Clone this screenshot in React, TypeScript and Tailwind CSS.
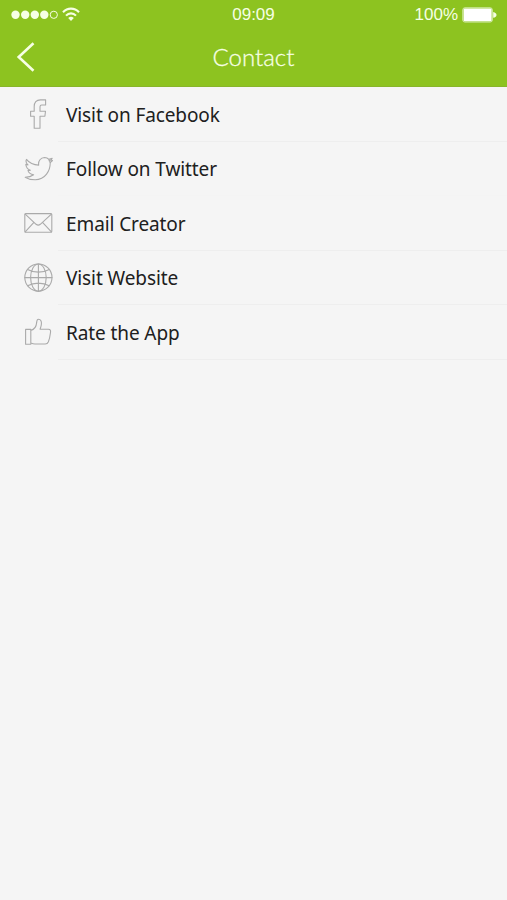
import type { ReactNode } from 'react';

const iconProps = {
  width: 30,
  height: 30,
  viewBox: '0 0 30 30',
  fill: 'none',
  stroke: '#aaaaaa',
  strokeWidth: 1.1,
  strokeLinejoin: 'round' as const,
  strokeLinecap: 'round' as const,
};

const FacebookIcon = () => (
  <svg {...iconProps}>
    <path d="M11.2 29.2V17.3H7.6V12.2H11.2V7.6C11.2 3.2 13.3 .9 17.4 .9H22.6V6H18.8C17.5 6 17 6.6 17 7.8V12.2H22.5L21.9 17.3H17V29.2Z" />
  </svg>
);

const TwitterIcon = () => (
  <svg {...iconProps}>
    <path d="M3.5 5.4C6.3 9 10.5 11 15.7 11.1C15 6.8 17.8 3.6 21.5 3.5C23.5 3.5 25 4.3 25.9 5.3L29.2 4.3L28 6.3L29.5 6.5L27.2 8.7C27.4 16.5 22.3 25.6 12.2 25.8C8.1 25.8 4.8 24.9 2.2 23.2C5.5 23.2 8.3 22.5 10.6 20.8C7.7 20.3 5.8 18.9 5 16.6L7.4 16.3C4.7 15.3 3 13.2 2.8 10.3L5 10.9C3 9.2 2.5 7.4 3.5 5.4Z" />
    <path d="M25.9 5.4L27.2 8.5M26 6.8L28.5 5.6" />
  </svg>
);

const MailIcon = () => (
  <svg {...iconProps}>
    <rect x="1.8" y="5.6" width="27" height="18.7" rx="1" />
    <path d="M2.2 6.1L13.1 16.3Q15.2 18 17.3 16.3L28.4 6.1M2.2 23.8L10.9 14.3M28.4 23.8L19.5 14.3" />
  </svg>
);

const GlobeIcon = () => (
  <svg {...iconProps}>
    <circle cx="15.4" cy="14.6" r="13.6" />
    <ellipse cx="15.4" cy="14.6" rx="7.8" ry="13.6" />
    <path d="M15.4 1V28.2M1.8 14.6H29M4.6 6.4C10.9 10 19.9 10 26.2 6.4M4.6 22.8C10.9 19.2 19.9 19.2 26.2 22.8" />
  </svg>
);

const ThumbIcon = () => (
  <svg {...iconProps}>
    <path d="M2.6 12.4H7.8V27.3H2.6ZM7.8 13.4C11.2 12.5 13.3 9.7 13.6 5.9C13.7 3.7 14.1 2.2 15.5 2.2C17.9 2.2 18.6 4.6 18.4 7C18.3 8.9 17.7 10.7 17.1 12.3H25.4C27.5 12.3 27.8 13.6 27.5 15.5C27.1 18.8 26.4 22.2 25.4 24.8C24.7 26.5 23.9 27 22.2 27H12C10.2 27 9.2 26.6 7.8 26" />
  </svg>
);

function Row({ icon, label, faint = false }: { icon: ReactNode; label: string; faint?: boolean }) {
  return (
    <li className="flex h-[54.5px] items-center pl-[23px]">
      <span className="w-[30px] shrink-0">{icon}</span>
      <span
        className={`ml-[5px] flex h-full flex-1 items-center border-b pl-2 pt-[2px] text-[19px] leading-6 tracking-[-0.1px] text-[#202020] ${
          faint ? 'border-[#f4f4f4]' : 'border-[#eeeeee]'
        }`}
      >
        {label}
      </span>
    </li>
  );
}

export default function App() {
  return (
    <div className="flex h-[900px] w-full flex-col overflow-hidden bg-[#f5f5f5] font-['Noto_Sans',sans-serif]">
      <header className="h-[87px] shrink-0 border-b border-[#88b52b] bg-[#8dc320] text-[#f6ffe4]">
        <div className="grid h-[29px] grid-cols-3 items-center font-['Liberation_Sans',sans-serif] text-[17px]">
          <div className="flex items-center pl-[11px]">
            <svg width="48" height="12" viewBox="0 0 48 12" fill="currentColor">
              <circle cx="4.5" cy="5.8" r="4.2" />
              <circle cx="14.2" cy="5.8" r="4.2" />
              <circle cx="23.8" cy="5.8" r="4.2" />
              <circle cx="33.3" cy="5.8" r="4.2" />
              <circle cx="42.8" cy="5.8" r="3.6" fill="none" stroke="currentColor" strokeWidth="1" />
            </svg>
            <svg className="ml-[3px]" width="18" height="15" viewBox="0 0 18 15" fill="none" stroke="currentColor" strokeWidth="2.1">
              <path d="M1 5.2C5.5 .4 12.5 .4 17 5.2M4 8.6C6.8 5.6 11.2 5.6 14 8.6" />
              <path d="M6.2 11Q9 8.5 11.8 11L9 14Z" fill="currentColor" stroke="none" />
            </svg>
          </div>
          <span className="pt-px text-center leading-5">09:09</span>
          <div className="flex items-center justify-end pr-[10px]">
            <span className="pt-px leading-5">100%</span>
            <svg className="ml-1" width="35" height="16" viewBox="0 0 35 16">
              <rect x=".8" y=".8" width="29.5" height="14.2" rx="2" fill="none" stroke="#d6edb0" />
              <rect x="1.6" y="1.6" width="28" height="12.6" rx="1" fill="white" />
              <path d="M31.2 5Q34.5 5.8 34.5 8T31.2 10.8Z" fill="currentColor" />
            </svg>
          </div>
        </div>
        <div className="grid h-[55px] grid-cols-3 items-center">
          <svg className="ml-4" width="20" height="32" viewBox="0 0 20 32" fill="none" stroke="currentColor" strokeWidth="2.6">
            <path d="M17.5 2.2L2.7 16L17.5 29.8" />
          </svg>
          <h1 className="text-center font-['Lato',sans-serif] text-[24px] font-light leading-7 [-webkit-text-stroke:0.3px_currentColor]">
            Contact
          </h1>
        </div>
      </header>
      <ul>
        <Row icon={<FacebookIcon />} label="Visit on Facebook" />
        <Row icon={<TwitterIcon />} label="Follow on Twitter" faint />
        <Row icon={<MailIcon />} label="Email Creator" />
        <Row icon={<GlobeIcon />} label="Visit Website" />
        <Row icon={<ThumbIcon />} label="Rate the App" />
      </ul>
    </div>
  );
}
